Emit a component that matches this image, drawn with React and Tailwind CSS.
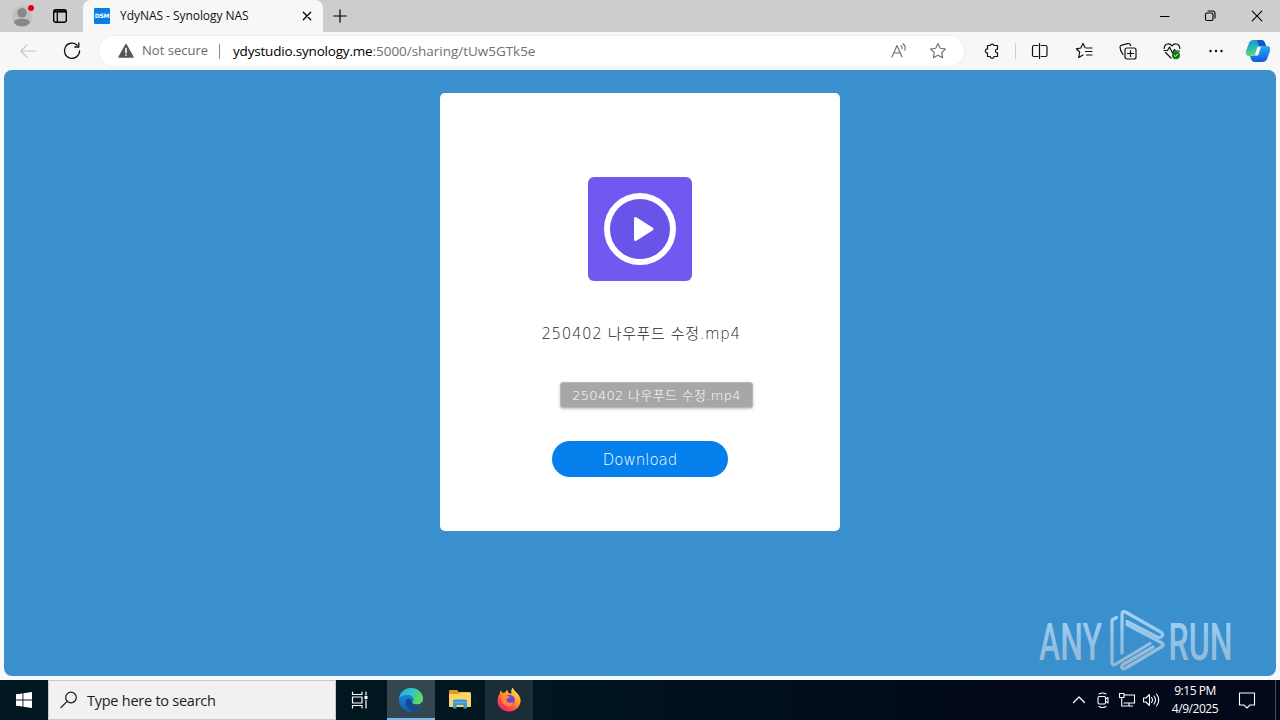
import React from "react";

const ui = "font-['Open_Sans','Noto_Sans',sans-serif]";
const page = "font-['DejaVu_Sans','Noto_Sans_CJK_KR',sans-serif]";

function Icon({ size = 20, sw = 1.1, className = "", children }) {
  return (
    <svg width={size} height={size} viewBox={`0 0 ${size} ${size}`} fill="none" stroke="currentColor" strokeWidth={sw} strokeLinecap="round" strokeLinejoin="round" className={`shrink-0 ${className}`}>
      {children}
    </svg>
  );
}

function TabStrip() {
  return (
    <div className="flex h-8 w-full bg-[#cdcdcd]">
      <div className="flex w-[83px] items-center rounded-br-md pl-[12px]">
        <Icon size={24}>
          <circle cx="10" cy="12" r="10" fill="#c2c0be" stroke="none" />
          <circle cx="10" cy="8.8" r="4.8" fill="#8a8886" stroke="none" />
          <path d="M2 19c0-3 3.5-4.300 8-4.300s8 1.300 8 4.300c-2 2.500-5 3.500-8 3.500s-6-1-8-3.500z" fill="#8a8886" stroke="none" />
          <circle cx="19" cy="4" r="3" fill="#e3000f" stroke="none" />
        </Icon>
        <Icon size={16} sw={1.4} className="ml-[16px] text-black">
          <rect x="1.700" y="1.700" width="12.600" height="12.600" rx="2.200" />
          <path d="M2 3.500h12" strokeWidth="2.200" strokeLinecap="butt" />
          <path d="M5.300 5v9" strokeWidth="1.300" />
        </Icon>
      </div>
      <div className="flex w-[240px] items-center rounded-t-lg bg-[#f7f7f7] pl-[11px]">
        <span className={`${page} flex h-4 w-4 items-center justify-center rounded-[1px] bg-[#087fe8] text-[6px] leading-4 font-bold tracking-[-0.2px] text-white`}>DSM</span>
        <span className={`${ui} ml-[10px] w-[182px] whitespace-nowrap text-[12px] leading-4 tracking-[-0.05px] text-[#111]`}>YdyNAS - Synology NAS</span>
        <Icon size={10} sw={1.3} className="text-black"><path d="M1.300 1.300l7.400 7.400M8.700 1.300L1.300 8.700" /></Icon>
      </div>
      <div className="flex flex-1 items-center pl-[10px] text-black">
        <Icon size={14} sw={1.2}><path d="M7 .8v12.400M.8 7h12.400" /></Icon>
        <div className="ml-auto flex items-center">
          <Icon size={12} sw={1} className="mr-[34px]"><path d="M2 6.500h9.500" strokeLinecap="butt" /></Icon>
          <Icon size={12} sw={1.1} className="mr-[35px]"><rect x="1.500" y="3" width="7.500" height="7.500" rx="1.500" /><path d="M4 1h4.500a2.500 2.500 0 012.500 2.500v4.500" /></Icon>
          <Icon size={12} sw={1.1} className="mr-[17px]"><path d="M1.200 1.200l9.600 9.600M10.800 1.200L1.200 10.800" /></Icon>
        </div>
      </div>
    </div>
  );
}

function Toolbar() {
  return (
    <div className="flex h-[38px] w-full items-center bg-[#f7f7f7] text-[#111]">
      <Icon className="ml-[18px] text-[#c4c4c4]"><path d="M17.500 10H3M9 3.800L2.800 10 9 16.200" /></Icon>
      <Icon className="ml-[24px]" sw={1.3}><path d="M15.200 4.200A7.600 7.600 0 1017.600 10M16.800 2v4h-4" /></Icon>
      <div className="ml-[17px] flex h-[30px] w-[865px] items-center rounded-full bg-white shadow-[0_0_1px_1px_#f0f0f0]">
        <Icon size={16} className="ml-[19px]"><path d="M8 1.500L15 14H1z" fill="#575757" stroke="#575757" strokeWidth="1.500" /><path d="M8 5.500v4.200M8 12v.2" stroke="#fff" strokeWidth="1.600" /></Icon>
        <span className={`${ui} ml-[8px] w-[77px] whitespace-nowrap text-[13px] tracking-[0.02px] text-[#6a6a6a]`}>Not secure</span>
        <span className="h-[15px] w-px bg-[#8a8a8a]" />
        <span className={`${ui} ml-[13px] flex-1 whitespace-nowrap text-[13.500px] tracking-[-0.03px] text-[#6f6f6f]`}><span className="tracking-[-0.19px] text-black">ydystudio.synology.me</span>:5000/sharing/tUw5GTk5e</span>
        <Icon size={18} className="text-[#6b6b6b]"><path d="M2 15L7 3.500 12 15M3.800 11h6.400M11 3.500c1 .8 1.300 2 1 3.300M13 1.700c2 1.500 2.600 4 1.800 6.500" /></Icon>
        <Icon size={18} className="mr-[17px] ml-[21px] text-[#6b6b6b]"><path d="M9 1.500l2.300 4.800 5.200.7-3.800 3.600.9 5.200L9 13.300l-4.600 2.500.9-5.200L1.500 7l5.200-.7z" /></Icon>
      </div>
      <Icon size={18} sw={1.2} className="ml-[19px]"><path d="M4.500 3.500h2.700a2 2 0 013.800 0h3.500v3.700c-2.700-.3-2.700 4 0 3.700v3.600H11a1.900 1.900 0 01-3.800 0H4.500v-3.400a2.100 2.100 0 110-4.200z" /></Icon>
      <span className="ml-[14px] h-[16px] w-px bg-[#d0d0d0]" />
      <Icon size={18} sw={1.2} className="ml-[15px]"><path d="M6.800 3.500H3Q1.500 3.500 1.500 5v8q0 1.500 1.500 1.500h3.800M10.200 3.500H14.500Q16 3.500 16 5v8q0 1.500-1.500 1.500h-4.300M8.500 1.500v15" /></Icon>
      <Icon size={18} sw={1.2} className="ml-[26px]"><path d="M10 5.500L8 1.500 5.800 6l-4.500.8L4.700 10l-1 5.500L8 13M11 6h6M10.500 9.500H17M11.500 13H17" /></Icon>
      <Icon size={18} sw={1.2} className="ml-[26px]"><rect x="6" y="6" width="11" height="11" rx="2" /><path d="M11.500 8.500v6M8.500 11.500h6M4 12.500C1.500 9 1 6.500 1 5q0-1.500 1.700-1.900l6-1.500q1.700-.4 2.500 1l.5 1" /></Icon>
      <Icon size={18} sw={1.2} className="ml-[26px]"><path d="M1.200 6.500C1.500 1 7 .8 9 4c2-3.200 7.500-3 7.800 2.500M1 8.500h3.500l2-3.500 3 6 2-3.500 1 1.500h4M2.500 10.500L8 16" /><circle cx="13" cy="13.300" r="4" fill="#107c10" stroke="none" /><path d="M11.300 13.500l1.100 1 2.200-2.400" stroke="#d9ffd9" strokeWidth="1" /></Icon>
      <Icon size={18} className="ml-[26px]"><g fill="currentColor" stroke="none"><circle cx="3.500" cy="9" r="1.200" /><circle cx="9" cy="9" r="1.200" /><circle cx="14.500" cy="9" r="1.200" /></g></Icon>
      <svg width="26" height="24" viewBox="0 0 26 24" className="ml-[20px] shrink-0">
        <defs>
          <linearGradient id="cpA" x1="0" y1="0" x2="0.2" y2="1"><stop stopColor="#168fd8" /><stop offset=".5" stopColor="#24b9bd" /><stop offset="1" stopColor="#69d86c" /></linearGradient>
          <linearGradient id="cpB" x1="0" y1="0" x2="0" y2="1"><stop stopColor="#21aef5" /><stop offset="1" stopColor="#1458dc" /></linearGradient>
        </defs>
        <path d="M9 1h7q3 0 4 3l1 3h-4q-3 0-4 3l-2 5q-1 2-4 2H4q-4 0-3-5l3-8q1-3 5-3z" fill="url(#cpA)" />
        <path d="M12 1h4q3 0 4 3l1 3h-4q-2 0-3 1z" fill="#1453c4" />
        <path d="M17 23h-7q-3 0-4-3l-1-3h3q3 0 4-3l2-5q1-2 4-2h4q4 0 3 5l-3 8q-1 3-5 3z" fill="url(#cpB)" />
        <path d="M13.300 8.500h1.500l-2.300 7H11z" fill="#f7f7f7" stroke="#f7f7f7" strokeWidth="2" strokeLinejoin="round" />
      </svg>
    </div>
  );
}

function Watermark() {
  return (
    <svg width="236" height="70" viewBox="0 0 236 70" className="absolute right-[5px] bottom-[1px]">
      <defs>
        <linearGradient id="wm" x1="0" y1="8" x2="0" y2="65" gradientUnits="userSpaceOnUse"><stop stopColor="#a2d3f5" /><stop offset=".5" stopColor="#93c1e4" /><stop offset="1" stopColor="#9bb5ce" /></linearGradient>
      </defs>
      <g fill="url(#wm)" fontFamily="Roboto" fontSize="51" fontWeight="500">
        <text x="4" y="54.500" textLength="63" lengthAdjust="spacingAndGlyphs">ANY</text>
        <text x="133.500" y="54.500" textLength="64" lengthAdjust="spacingAndGlyphs">RUN</text>
      </g>
      <g fill="none" stroke="url(#wm)" strokeWidth="3.200" strokeLinejoin="round" strokeLinecap="round">
        <path d="M81.500 12.500L77 15v43q.5 2.500 3 1.500L115 38.500" />
        <path d="M87 48V9q.5-3.500 3.500-2L126.500 27.500q2 1.500.5 3.500-2 2.500-5 1L92 16.500" />
        <path d="M92 19.500L127 38q2.500 1.700 0 3.500L90 63.500q-2.500 1-3.500-1.500 0-1.500 1.500-2.500L118 42" />
      </g>
    </svg>
  );
}

function SharePage() {
  return (
    <div className="flex h-[610px] w-full justify-center bg-[#f9f8f8] px-1 pb-1">
      <div className="relative flex w-full items-start justify-center rounded-[8px] bg-[#3a8fcd] pt-[23px]">
        <div className={`${page} relative flex h-[438px] w-[400px] flex-col items-center rounded-[5px] bg-white pt-[84px]`}>
          <svg width="104" height="104" viewBox="0 0 104 104">
            <rect width="104" height="104" rx="6" fill="#7059ef" />
            <circle cx="52" cy="52" r="33" fill="#6854e9" stroke="#fff" strokeWidth="6" />
            <path d="M47.500 41.500v21L64 52z" fill="#fff" stroke="#fff" strokeWidth="3" strokeLinejoin="round" />
          </svg>
          <div className="mt-[41px] h-6 whitespace-nowrap pl-[2px] text-[15px] leading-6 font-extralight tracking-[0.62px] text-[#202830]">250402 나우푸드 수정.mp4</div>
          <button className="mt-[95px] h-9 w-44 shrink-0 rounded-full bg-[#057feb] pt-[3px] text-[15px] font-extralight text-white">Download</button>
          <div className="absolute top-[289px] left-[120px] flex h-[26px] w-[193px] items-center justify-center rounded-[3px] border border-[#b8b8b8] bg-[#a7a7a7] pt-px text-[13px] font-extralight tracking-[0.32px] whitespace-nowrap text-white shadow-[0_1px_3px_rgba(0,0,0,0.25)]">250402 나우푸드 수정.mp4</div>
        </div>
        <Watermark />
      </div>
    </div>
  );
}

function EdgeLogo() {
  return (
    <svg width="26" height="26" viewBox="0 0 26 26">
      <defs>
        <linearGradient id="edTop" x1="0" y1="0" x2="1" y2=".4"><stop stopColor="#2aa9e2" /><stop offset=".55" stopColor="#2fc5c5" /><stop offset="1" stopColor="#60d95b" /></linearGradient>
        <linearGradient id="edLow" x1="0" y1="0" x2="0" y2="1"><stop stopColor="#1a9be2" /><stop offset="1" stopColor="#1258b0" /></linearGradient>
      </defs>
      <circle cx="13" cy="13" r="12" fill="url(#edLow)" />
      <path d="M1 12C2 5 7 1 13 1c7 0 12 5 12 10.500 0 4-3 6-6 6-3.500 0-5-1-4.500-2 2-3 1-7-4-7.500C6 7.600 2.500 9 1 12z" fill="url(#edTop)" />
      <path d="M9 12c-3 5 0 11 7 12.500 3-.5 6-3 7.500-5.500-5 2-10 0-10-4 0-2-1-4-4.500-3z" fill="#15498f" />
      <path d="M14.500 15.500c-.5 1 1 2 4.500 2 2 0 4-.8 5.200-2.500L26 18l-2.500 1c-5 2-10 0-10-4z" fill="#34474f" />
    </svg>
  );
}

function FolderLogo() {
  return (
    <svg width="24" height="22" viewBox="0 0 24 22">
      <path d="M1 2q0-1 1-1h7l2 2h11v5H1z" fill="#e59a13" />
      <path d="M1 5h10l1-1.500h11V18H1z" fill="#fbd368" />
      <path d="M5 19.500v-7q0-2 2-2h10q2 0 2 2v7h-3.500V16h-7v3.500z" fill="#3a98d5" />
      <path d="M5.500 13.500h13" stroke="#62b4e4" strokeWidth="1" />
    </svg>
  );
}

function FirefoxLogo() {
  return (
    <svg width="26" height="26" viewBox="0 0 26 26">
      <defs>
        <linearGradient id="ff" x1=".9" y1="0" x2=".2" y2="1"><stop stopColor="#fff04b" /><stop offset=".4" stopColor="#ffa52b" /><stop offset=".7" stopColor="#ff4c45" /><stop offset="1" stopColor="#ed1b82" /></linearGradient>
      </defs>
      <path d="M3.500 7l1-3.500L7 6l2-.5q1-2 2.500-2.500 0 2 2 3.500h2q-.8-3 1-6 2 3.500 4.500 5.500 4 4 3.500 9C23.500 20.500 19 24.500 13 24.500S1.500 20 1.500 14Q1.500 10 3.500 7z" fill="url(#ff)" />
      <circle cx="13.500" cy="13" r="5.300" fill="#7540dc" />
      <path d="M5 9q4-2.500 7 0l2 .8q-1 2-3.500 2Q10 14 12 15.500q3 1 5-1 0 5-5 5Q5 18 5 9z" fill="#ff8a2d" />
    </svg>
  );
}

function Taskbar() {
  return (
    <div className="flex h-10 w-full items-stretch bg-[linear-gradient(90deg,#001720_0%,#001720_40%,#020b1b_70%,#020817_100%)] text-white">
      <div className="flex w-12 items-center justify-center">
        <svg width="16" height="16" viewBox="0 0 16 16" fill="#fff"><path d="M0 2.300L6.500 1.400v6.200H0zM7.400 1.200L16 0v7.600H7.400zM0 8.400h6.500v6.200L0 13.700zM7.400 8.400H16V16l-8.600-1.200z" /></svg>
      </div>
      <div className="flex w-72 items-center border border-[#cbc7c7] bg-[#f1f1f1] pl-[11px] text-[#1c1c1c]">
        <Icon size={18} sw={1.2}><circle cx="11" cy="6.500" r="5.300" /><path d="M7.200 10.300L1 16.500" /></Icon>
        <span className={`${ui} ml-[9px] pt-px whitespace-nowrap text-[14.500px] tracking-[-0.25px]`}>Type here to search</span>
      </div>
      <div className="flex w-[51px] items-center justify-center pr-[3px]">
        <Icon size={18} sw={1.2}><path d="M1.500 1v2.500h9.500V1M1.500 17v-2.500h9.500V17M1.500 6h9.500v6H1.500zM15 1v3M15 9v8" /><rect x="13.500" y="5" width="3" height="3" fill="currentColor" stroke="none" /></Icon>
      </div>
      <div className="flex w-12 items-center justify-center border-b-2 border-[#76b9ed] bg-[#34474f] pt-[2px]"><EdgeLogo /></div>
      <div className="flex w-[50px] items-center justify-center"><FolderLogo /></div>
      <div className="flex w-12 items-center justify-center bg-[#1b2e37]"><FirefoxLogo /></div>
      <div className="ml-auto flex items-center">
        <Icon size={14} sw={1.3} className="mr-[9px]"><path d="M1.500 9.500L7 4l5.500 5.500" /></Icon>
        <Icon size={16} className="mr-[7px]"><rect x="3" y="4.500" width="7.500" height="7.500" rx="1.200" /><path d="M10.500 7l2.500-1.500v5.500L10.500 9.500M4 2q3.500-2 7 0M4 14.500q3.500 2 7 0" /></Icon>
        <Icon size={18} className="mr-[6px]"><path d="M6.500 4H16.500v8H6M11 12v3M7.500 15h7M1.500 2.500h4.500v4H1.500zM3.700 6.500V15h4" /></Icon>
        <Icon size={18} className="mr-[11px]"><path d="M1.500 7h2.500l3.500-3.500v11L4 11H1.500zM9.500 6.500q2 2.500 0 5M12 5q3 4 0 8M14.500 3q4.500 6 0 12" /></Icon>
        <div className={`${ui} w-[48px] text-center text-[12px] leading-[18px] tracking-[-0.45px] whitespace-nowrap`}>
          <div>9:15 PM</div>
          <div>4/9/2025</div>
        </div>
        <Icon size={18} className="mr-[19px] ml-[19px]"><path d="M1.500 2h15v12h-4.500l-3 3-3-3H1.500z" strokeLinejoin="miter" /></Icon>
        <span className="mr-[4px] h-10 w-px bg-[#46505c]" />
      </div>
    </div>
  );
}

export default function App() {
  return (
    <div className="flex h-[720px] w-[1280px] flex-col overflow-hidden">
      <TabStrip />
      <Toolbar />
      <SharePage />
      <Taskbar />
    </div>
  );
}
